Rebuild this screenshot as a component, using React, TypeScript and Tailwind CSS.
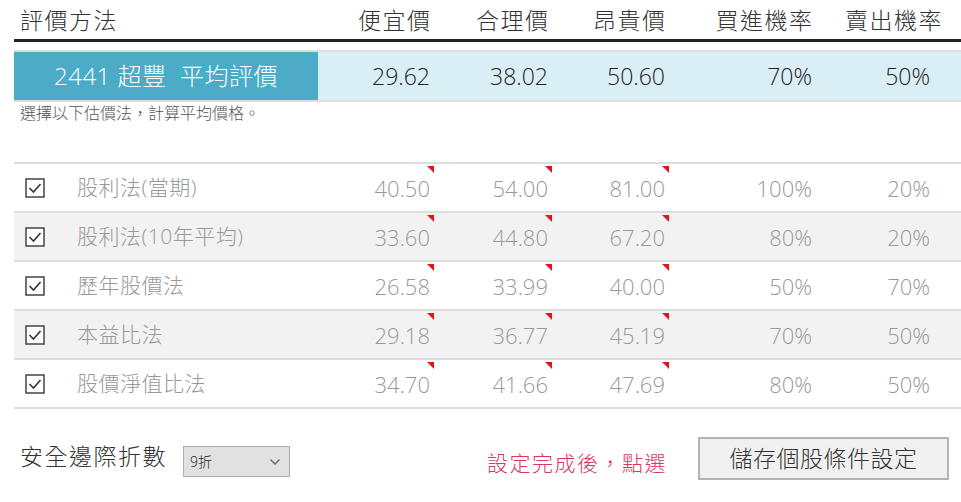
import React from 'react';

// ============================================================================
// Data
// ============================================================================

const HEADERS = ['便宜價', '合理價', '昂貴價', '買進機率', '賣出機率'];

const AVERAGE = { title: '2441 超豐  平均評價', values: ['29.62', '38.02', '50.60', '70%', '50%'] };

const METHODS = [
  { name: '股利法(當期)', values: ['40.50', '54.00', '81.00', '100%', '20%'] },
  { name: '股利法(10年平均)', values: ['33.60', '44.80', '67.20', '80%', '20%'] },
  { name: '歷年股價法', values: ['26.58', '33.99', '40.00', '50%', '70%'] },
  { name: '本益比法', values: ['29.18', '36.77', '45.19', '70%', '50%'] },
  { name: '股價淨值比法', values: ['34.70', '41.66', '47.69', '80%', '50%'] },
];

const FONT = { fontFamily: '"Open Sans", "Noto Sans CJK TC", sans-serif' };
const GRID = 'grid grid-cols-[304px_112px_118px_117px_147px_118px_1fr]';

// ============================================================================
// Pieces
// ============================================================================

function CheckIcon() {
  return (
    <svg width="20" height="20" viewBox="0 0 20 20" className="shrink-0">
      <rect x="1" y="1" width="18" height="18" fill="white" stroke="#444" strokeWidth="1.5" />
      <path d="M4.5 10 L8.5 14 L15.5 6" fill="none" stroke="#333" strokeWidth="1.6" />
    </svg>
  );
}

function Corner() {
  return (
    <span className="absolute top-[2px] right-[-4px] w-[7px] h-[7px] bg-[#e8101a] [clip-path:polygon(0_0,100%_0,100%_100%)]" />
  );
}

// ============================================================================
// Component
// ============================================================================

export default function App() {
  return (
    <div className="w-[961px] h-[502px] bg-white pl-[14px] overflow-hidden font-light" style={FONT}>
      {/* Header */}
      <div className={`${GRID} h-[42px] border-b-[3px] border-[#222] text-[23px] tracking-[1.5px] text-[#333] items-center`}>
        <div className="pl-[6px] pt-[2px]">評價方法</div>
        {HEADERS.slice(0, 4).map((h) => (
          <div key={h} className="text-right pt-[2px] -mr-[1.5px]">{h}</div>
        ))}
        <div className="col-span-2 text-right pr-[18px] pt-[2px]">{HEADERS[4]}</div>
      </div>

      {/* Average row */}
      <div className={`${GRID} mt-[8px] h-[52px] border-y-2 border-[#dedede] bg-[#daeef5]`}>
        <div className="bg-[#4cabc7] text-white text-[24px] tracking-[0.5px] flex items-center justify-center whitespace-pre">
          {AVERAGE.title}
        </div>
        {AVERAGE.values.map((v, i) => (
          <div key={i} className="flex items-center justify-end text-[23px] text-[#222]">{v}</div>
        ))}
      </div>

      <p className="h-[22px] leading-[22px] text-[16px] text-[#555] pl-[6px]">選擇以下估價法，計算平均價格。</p>

      {/* Methods */}
      <div className="mt-[38px] border-b-2 border-[#dedede]">
        {METHODS.map((m, r) => (
          <div
            key={m.name}
            className={`${GRID} h-[49px] border-t-2 border-[#dedede] ${r % 2 === 1 ? 'bg-[#f2f2f2]' : 'bg-white'}`}
          >
            <div className="flex items-center gap-[32px] pl-[11px] text-[21px] text-[#999]">
              <CheckIcon />
              <span className="tracking-[0.5px]">{m.name}</span>
            </div>
            {m.values.map((v, i) => (
              <div key={i} className="relative flex items-center justify-end text-[22px] text-[#999] pt-[2px]">
                {i < 3 && <Corner />}
                {v}
              </div>
            ))}
          </div>
        ))}
      </div>

      {/* Footer */}
      <div className="mt-[28px] flex items-center h-[43px]">
        <span className="w-[169px] pl-[6px] text-[23px] tracking-[1.5px] text-[#333] -mt-[4px]">安全邊際折數</span>
        <div className="relative mt-[6px]">
          <select
            defaultValue="9折"
            className="appearance-none w-[107px] h-[31px] bg-[#e1e1e1] border border-[#adadad] pl-[6px] text-[14px] text-[#222] outline-none"
            style={FONT}
          >
            <option>9折</option>
            <option>8折</option>
            <option>7折</option>
          </select>
          <svg
            width="12"
            height="8"
            viewBox="0 0 12 8"
            className="absolute right-[9px] top-[12px] pointer-events-none"
          >
            <path d="M1.5 1.5 L6 6 L10.5 1.5" fill="none" stroke="#666" strokeWidth="1.3" />
          </svg>
        </div>
        <span className="ml-[197px] w-[211px] text-[21px] tracking-[1.5px] text-[#d9365e] mt-[10px]">設定完成後，點選</span>
        <button
          className="w-[251px] h-[43px] bg-[#f0f0f0] border-2 border-[#b4b4b4] text-[23px] tracking-[0.5px] text-[#333]"
          style={FONT}
        >
          儲存個股條件設定
        </button>
      </div>
    </div>
  );
}
